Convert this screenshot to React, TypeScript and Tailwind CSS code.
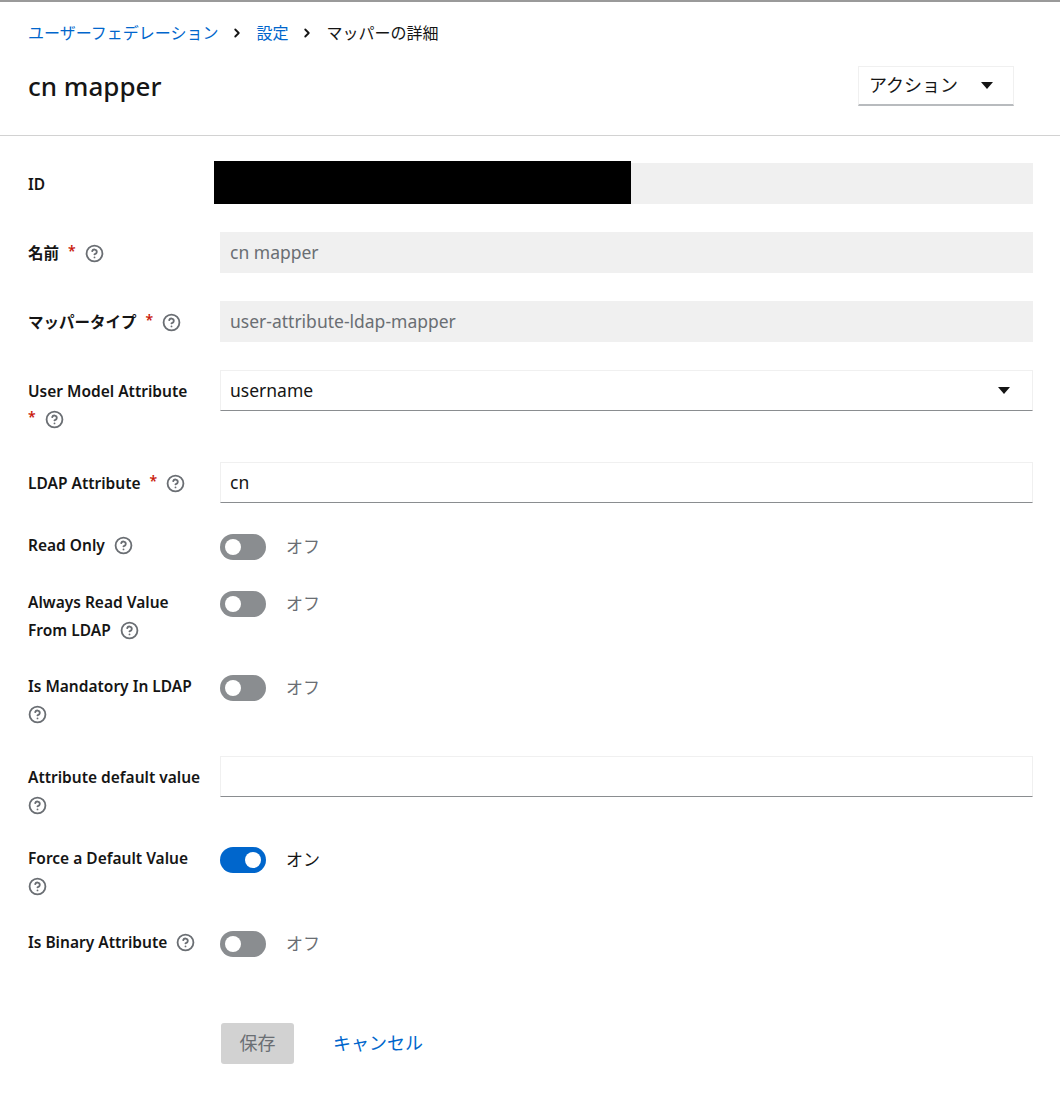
import React from 'react';
import { ChevronRight, CircleHelp } from 'lucide-react';

const font = "font-['Noto_Sans','Noto_Sans_CJK_JP',sans-serif]";

function Req() {
  return <span className="relative top-[-3px] ml-[9px] text-[14px] text-[#c9190b]">*</span>;
}

function Help({ first }: { first?: boolean }) {
  return (
    <span className={`${first ? '' : 'ml-[9px]'} inline-flex align-middle -mt-[3px] text-[#6a6e73]`}>
      <CircleHelp size={19} strokeWidth={2.3} />
    </span>
  );
}

function Label({ children, pt = 'pt-[7px]' }: { children: React.ReactNode; pt?: string }) {
  return (
    <div className={`w-[192px] shrink-0 ${pt} pr-2 text-[15.5px] font-semibold leading-[28px] text-[#151515] whitespace-nowrap`}>
      {children}
    </div>
  );
}

function ReadField({ value }: { value: string }) {
  return (
    <div className="h-[41px] flex-1 bg-[#f0f0f0] px-[10px] flex items-center text-[17.5px] text-[#6a6e73]">
      {value}
    </div>
  );
}

function TextField({ value }: { value: string }) {
  return (
    <div className="h-[41px] flex-1 border border-[#f0f0f0] border-b-[#8a8d90] px-[9px] flex items-center text-[17.5px] text-[#151515]">
      {value}
    </div>
  );
}

function Caret() {
  return (
    <svg width="12" height="7" viewBox="0 0 12 7">
      <path d="M0 0h12L6 7z" fill="#151515" />
    </svg>
  );
}

function Toggle({ on }: { on?: boolean }) {
  return (
    <div className="self-start flex items-center mt-[3px]">
      <div className={`relative w-[46px] h-[26px] rounded-full ${on ? 'bg-[#0066cc]' : 'bg-[#8a8d90]'}`}>
        <div className={`absolute top-[5px] w-[16px] h-[16px] rounded-full bg-white ${on ? 'left-[25px]' : 'left-[5px]'}`} />
      </div>
      <span className={`ml-[20px] text-[17px] leading-[26px] ${on ? 'text-[#151515]' : 'text-[#6a6e73]'}`}>
        {on ? 'オン' : 'オフ'}
      </span>
    </div>
  );
}

export default function App() {
  return (
    <div className={`${font} w-[1060px] min-h-[1100px] bg-white border-t-2 border-[#9a9a9a]`}>
      <header className="pl-7 pr-[27px] pt-[19px] pb-[29px] border-b border-[#d2d2d2]">
        <nav className="flex items-center text-[16px] leading-[24px]">
          <span className="text-[#0066cc]">ユーザーフェデレーション</span>
          <ChevronRight size={14} strokeWidth={3.2} className="mx-[12px] text-[#151515]" />
          <span className="text-[#0066cc]">設定</span>
          <ChevronRight size={14} strokeWidth={3.2} className="mx-[12px] text-[#151515]" />
          <span className="text-[#151515]">マッパーの詳細</span>
        </nav>
        <div className="mt-[21px] flex items-center justify-between">
          <h1 className="text-[26px] leading-[36px] font-medium text-[#151515]">cn mapper</h1>
          <button className="mr-[19px] h-[40px] w-[156px] border border-[#f0f0f0] border-b-[#b8bbbe] border-b-2 pl-[10px] pr-[20px] flex items-center justify-between text-[18px] text-[#151515]">
            <span>アクション</span>
            <Caret />
          </button>
        </div>
      </header>

      <form className="pl-7 pr-[27px] pt-[27px] flex flex-col gap-[28px]">
        <div className="flex">
          <Label>ID</Label>
          <div className="relative flex-1 flex">
            <ReadField value="" />
            <div className="absolute left-[-6px] top-[-2px] w-[417px] h-[43px] bg-black" />
          </div>
        </div>

        <div className="flex">
          <Label>名前<Req /><Help /></Label>
          <ReadField value="cn mapper" />
        </div>

        <div className="flex">
          <Label>マッパータイプ<Req /><Help /></Label>
          <ReadField value="user-attribute-ldap-mapper" />
        </div>

        <div className="flex">
          <Label>
            User Model Attribute
            <br />
            <span className="-ml-[9px]"><Req /></span>
            <Help />
          </Label>
          <div className="h-[41px] flex-1 border border-[#f0f0f0] border-b-[#8a8d90] pl-[9px] pr-[22px] flex items-center justify-between text-[17.5px] text-[#151515]">
            <span>username</span>
            <Caret />
          </div>
        </div>

        <div className="flex">
          <Label>LDAP Attribute<Req /><Help /></Label>
          <TextField value="cn" />
        </div>

        <div className="flex">
          <Label pt="pt-0">Read Only<Help /></Label>
          <Toggle />
        </div>

        <div className="flex">
          <Label pt="pt-0">Always Read Value<br />From LDAP<Help /></Label>
          <Toggle />
        </div>

        <div className="flex">
          <Label pt="pt-0">Is Mandatory In LDAP<br /><Help first /></Label>
          <Toggle />
        </div>

        <div className="flex">
          <Label>Attribute default value<br /><Help first /></Label>
          <TextField value="" />
        </div>

        <div className="flex -mt-[3px]">
          <Label pt="pt-0">Force a Default Value<br /><Help first /></Label>
          <Toggle on />
        </div>

        <div className="flex">
          <Label pt="pt-0">Is Binary Attribute<Help /></Label>
          <Toggle />
        </div>

        <div className="flex items-center pl-[193px] mt-[38px]">
          <button type="button" className="h-[41px] w-[73px] rounded-[3px] bg-[#d2d2d2] text-[18px] text-[#6a6e73]">
            保存
          </button>
          <span className="ml-[39px] text-[18px] text-[#0066cc]">キャンセル</span>
        </div>
      </form>
    </div>
  );
}
